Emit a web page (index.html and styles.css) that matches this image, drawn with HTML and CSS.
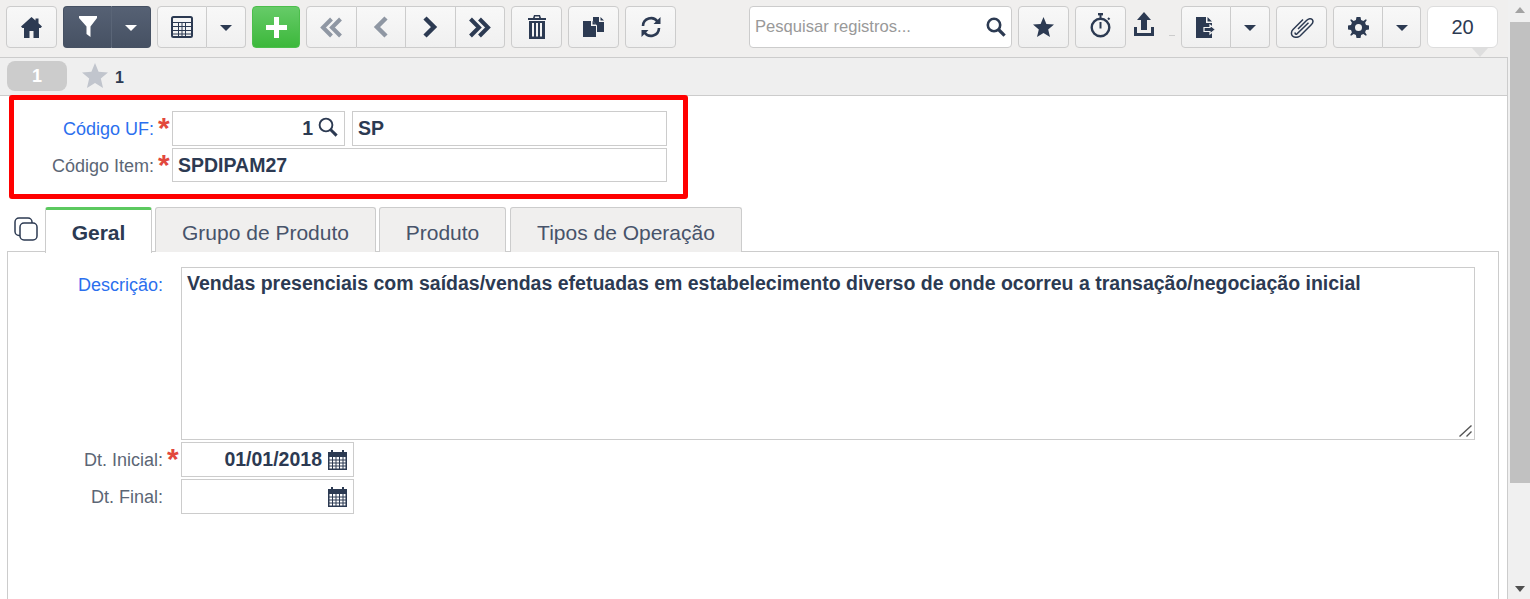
FILE: index.html
```html
<!DOCTYPE html>
<html lang="pt-BR">
<head>
    <meta charset="UTF-8">
    <meta name="viewport" content="width=device-width, initial-scale=1.0">
    <title>Código Item</title>
    <link rel="stylesheet" href="styles.css">
</head>
<body>
<div class="app">
    <div class="main">
        <!-- barra de ferramentas -->
        <div class="toolbar">
            <button class="btn"><svg class="icon" width="21" height="21" viewBox="0 0 21 21"><path d="M10.5 0 L14.5 3.6 V1.5 H17.5 V6.3 L21 9.6 L19.6 11 H18 V21 H12.5 V14 H8.5 V21 H3 V11 H1.4 L0 9.6 Z"/></svg></button>

            <div class="split dark">
                <button class="btn main-part"><svg width="20" height="22" viewBox="0 0 20 22"><path fill="#fff" d="M1 0 H19 V2 L12.5 10.5 V21 L8.5 18 V10.5 L1 2 Z"/></svg></button>
                <button class="btn caret-part"><span class="caret white"></span></button>
            </div>

            <div class="split wide">
                <button class="btn main-part"><svg width="22" height="22" viewBox="0 0 22 22" fill="none" stroke="#2c3a52"><rect x="1" y="1" width="20" height="20" rx="1.5" stroke-width="2"/><path stroke-width="1" d="M1 6.5 H21 M2 10.5 H20 M2 14.5 H20 M2 18 H20 M7.5 6 V20 M11 6 V20 M14.5 6 V20"/></svg></button>
                <button class="btn caret-part"><span class="caret"></span></button>
            </div>

            <button class="btn add"><svg width="21" height="21" viewBox="0 0 21 21"><path fill="#fff" d="M8 0 H13 V8 H21 V13 H13 V21 H8 V13 H0 V8 H8 Z"/></svg></button>

            <div class="nav-group">
                <button class="btn"><svg width="23" height="21" viewBox="0 0 23 21" fill="none" stroke="#8f97a3" stroke-width="4"><path d="M11.5 2 L3 10.5 L11.5 19 M20.5 2 L12 10.5 L20.5 19"/></svg></button>
                <button class="btn"><svg width="15" height="22" viewBox="0 0 15 22" fill="none" stroke="#8f97a3" stroke-width="4.5"><path d="M13 2 L4 11 L13 20"/></svg></button>
                <button class="btn"><svg width="15" height="22" viewBox="0 0 15 22" fill="none" stroke="#2c3a52" stroke-width="4.5"><path d="M2 2 L11 11 L2 20"/></svg></button>
                <button class="btn"><svg width="23" height="21" viewBox="0 0 23 21" fill="none" stroke="#2c3a52" stroke-width="4"><path d="M2.5 2 L11 10.5 L2.5 19 M11.5 2 L20 10.5 L11.5 19"/></svg></button>
            </div>

            <button class="btn"><svg class="icon" width="18" height="24" viewBox="0 0 18 24"><path d="M6 0 H12 L13 3 H18 V5 H0 V3 H5 Z M7 1.5 L6.8 3 H11.2 L11 1.5 Z" fill-rule="evenodd"/><path fill-rule="evenodd" d="M1 6 H17 V24 H1 Z M4 8 V21.5 H6 V8 Z M8 8 V21.5 H10 V8 Z M12 8 V21.5 H14 V8 Z"/></svg></button>
            <button class="btn"><svg class="icon" width="21" height="20" viewBox="0 0 21 20"><path d="M0 4 H8 V9 H13 V20 H0 Z M9.5 4 L13 7.5 H9.5 Z"/><path d="M10 0 H16 V5 H21 V15 H14 V8.5 L10 4.5 Z M17.5 0 L21 3.5 H17.5 Z"/></svg></button>
            <button class="btn"><svg width="22" height="22" viewBox="0 0 22 22" fill="none"><path stroke="#2c3a52" stroke-width="2.6" d="M3 10 A8 8 0 0 1 17.5 5.5 M19 12 A8 8 0 0 1 4.5 16.5"/><path fill="#2c3a52" d="M20.5 1 V8 H13.5 Z M1.5 21 V14 H8.5 Z"/></svg></button>

            <div class="search">
                <input type="text" class="search-input" placeholder="Pesquisar registros...">
                <svg width="20" height="20" viewBox="0 0 20 20" fill="none" stroke="#2c3a52"><circle cx="8" cy="8" r="6.2" stroke-width="2.6"/><path stroke-width="3.2" d="M12.5 12.5 L18.6 18.6"/></svg>
            </div>

            <button class="btn"><svg class="icon" width="21" height="20" viewBox="0 0 21 20"><path d="M10.5 0 L13.4 6.9 L21 7.6 L15.2 12.5 L17 20 L10.5 16 L4 20 L5.8 12.5 L0 7.6 L7.6 6.9 Z"/></svg></button>
            <button class="btn"><svg class="timer" width="21" height="25" viewBox="0 0 21 25" fill="none" stroke="#2c3a52"><path stroke-width="2.4" d="M8 1.2 H13"/><path stroke-width="2" d="M10.5 2 V5"/><circle cx="10.5" cy="14.5" r="8.8" stroke-width="2.4"/><path stroke-width="2" d="M10.5 9 V15.5"/><path stroke-width="2" d="M18 5 L19.5 6.5"/></svg></button>

            <div class="upload">
                <svg class="icon" width="20" height="24" viewBox="0 0 20 24"><path d="M10 0 L17 8 H13 V18 H7 V8 H3 Z M0 15 H3 V21 H17 V15 H20 V24 H0 Z"/></svg>
                <span class="upload-dash"></span>
            </div>

            <div class="split wide">
                <button class="btn main-part"><svg class="icon" width="20" height="21" viewBox="0 0 20 21"><path d="M0 0 H10 V6 H16 V21 H0 Z M11.5 0 L16 4.5 H11.5 Z"/><path stroke="#f5f5f5" stroke-width="1.2" d="M8 10.5 H14 V8 L19.5 12.5 L14 17 V14.5 H8 Z"/></svg></button>
                <button class="btn caret-part"><span class="caret"></span></button>
            </div>

            <button class="btn"><svg width="24" height="21" viewBox="0 0 24 21" fill="none" stroke="#2c3a52" stroke-width="1.5"><path d="M8 12 L16.5 3.5 C18.5 1.5 21 1.2 22.2 2.5 C23.5 4 23 6 21 8 L10 19 C7.5 21 4 20.5 2.5 19 C1 17.5 1 14.5 3 12.5 L13 2.5 M5.5 15.5 C4.8 16.5 5.3 17.5 6.5 17.2 L18.5 5.8"/></svg></button>

            <div class="split">
                <button class="btn main-part"><svg class="icon" width="21" height="21" viewBox="0 0 21 21"><path fill-rule="evenodd" d="M8.5 0 H12.5 L13.1 3 L15.3 3.9 L17.9 2.2 L18.8 3.1 L17.1 5.7 L18 7.9 L21 8.5 V12.5 L18 13.1 L17.1 15.3 L18.8 17.9 L17.9 18.8 L15.3 17.1 L13.1 18 L12.5 21 H8.5 L7.9 18 L5.7 17.1 L3.1 18.8 L2.2 17.9 L3.9 15.3 L3 13.1 L0 12.5 V8.5 L3 7.9 L3.9 5.7 L2.2 3.1 L3.1 2.2 L5.7 3.9 L7.9 3 Z M10.5 7 A3.5 3.5 0 1 0 10.5 14 A3.5 3.5 0 1 0 10.5 7 Z"/></svg></button>
                <button class="btn caret-part"><span class="caret"></span></button>
            </div>

            <div class="count">20</div>
        </div>

        <!-- abas de registros abertos -->
        <div class="subbar">
            <span class="record-badge">1</span>
            <svg class="record-star" width="26" height="25" viewBox="0 0 21 20"><path fill="#c1c5cd" d="M10.5 0 L13.4 6.9 L21 7.6 L15.2 12.5 L17 20 L10.5 16 L4 20 L5.8 12.5 L0 7.6 L7.6 6.9 Z"/></svg>
            <span class="record-name">1</span>
        </div>

        <div class="content">
            <div class="key-box">
                <div class="form-row">
                    <label class="key-label link">Código UF:</label>
                    <span class="required">*</span>
                    <div class="field field-code">
                        <span class="value">1</span>
                        <svg class="lookup" width="20" height="20" viewBox="0 0 20 20" fill="none" stroke="#2c3a52"><circle cx="8" cy="8" r="6.4" stroke-width="1.9"/><path stroke-width="3" d="M12.5 12.5 L18.6 18.6"/></svg>
                    </div>
                    <div class="field field-left field-uf"><span class="value">SP</span></div>
                </div>
                <div class="form-row short">
                    <label class="key-label">Código Item:</label>
                    <span class="required">*</span>
                    <div class="field field-left field-item"><span class="value">SPDIPAM27</span></div>
                </div>
            </div>

            <div class="tabs">
                <svg class="tabs-copy" width="24" height="24" viewBox="0 0 24 24" fill="none" stroke="#2c3a52" stroke-width="1.5"><rect x="6" y="6" width="17" height="17" rx="4"/><path d="M6 18.5 H5 A4 4 0 0 1 1 14.5 V5 A4 4 0 0 1 5 1 H14 A4 4 0 0 1 18 5 V6"/></svg>
                <div class="tab active">Geral</div>
                <div class="tab tab-grupo">Grupo de Produto</div>
                <div class="tab tab-produto">Produto</div>
                <div class="tab tab-tipos">Tipos de Operação</div>
            </div>

            <div class="panel">
                <div class="form-row top">
                    <label class="panel-label link">Descrição:</label>
                    <span class="required"></span>
                    <div class="description-wrap">
                        <textarea class="description">Vendas presenciais com saídas/vendas efetuadas em estabelecimento diverso de onde ocorreu a transação/negociação inicial</textarea>
                        <svg class="resize-grip" width="13" height="12" viewBox="0 0 13 12" fill="none" stroke="#555" stroke-width="1.4"><path d="M0.5 11.5 L12.5 0.5 M7.5 11.5 L12.5 6.5"/></svg>
                    </div>
                </div>
                <div class="form-row">
                    <label class="panel-label">Dt. Inicial:</label>
                    <span class="required">*</span>
                    <div class="field field-date">
                        <span class="value">01/01/2018</span>
                        <svg class="icon" width="19" height="20" viewBox="0 0 19 20"><path fill-rule="evenodd" d="M3 0 H5 V2 H14 V0 H16 V2 H19 V20 H0 V2 H3 Z M1.5 7 V18.5 H17.5 V7 Z"/><path fill="none" stroke="#2c3a52" d="M1 10 H18 M1 13 H18 M1 16 H18 M4.5 7 V19 M8 7 V19 M11.5 7 V19 M15 7 V19"/></svg>
                    </div>
                </div>
                <div class="form-row">
                    <label class="panel-label">Dt. Final:</label>
                    <span class="required"></span>
                    <div class="field field-date">
                        <svg class="icon" width="19" height="20" viewBox="0 0 19 20"><path fill-rule="evenodd" d="M3 0 H5 V2 H14 V0 H16 V2 H19 V20 H0 V2 H3 Z M1.5 7 V18.5 H17.5 V7 Z"/><path fill="none" stroke="#2c3a52" d="M1 10 H18 M1 13 H18 M1 16 H18 M4.5 7 V19 M8 7 V19 M11.5 7 V19 M15 7 V19"/></svg>
                    </div>
                </div>
            </div>
        </div>
    </div>

    <!-- barra de rolagem -->
    <div class="scrollbar">
        <span class="arrow-up"></span>
        <div class="thumb"></div>
        <span class="arrow-down"></span>
    </div>
</div>
</body>
</html>
```

FILE: styles.css
```css
* {
    box-sizing: border-box;
}

html, body {
    margin: 0;
    height: 100%;
    overflow: hidden;
}

body {
    font-family: "Liberation Sans", Arial, sans-serif;
    color: #2c3a52;
    background: #fff;
}

.app {
    display: flex;
    height: 599px;
}

.main {
    width: 1508px;
    display: flex;
    flex-direction: column;
}

.icon {
    fill: #2c3a52;
}

/* barra de ferramentas */
.toolbar {
    height: 58px;
    display: flex;
    gap: 6px;
    padding: 6px 10px 0 6px;
    background: #f0efee;
    border-bottom: 1px solid #ccc;
    flex-shrink: 0;
}

.btn {
    width: 51px;
    height: 42px;
    padding: 0;
    display: flex;
    align-items: center;
    justify-content: center;
    background: linear-gradient(#f8f8f8, #f0f0f0);
    border: 1px solid #ccc;
    border-radius: 4px;
    flex-shrink: 0;
}

.split {
    display: flex;
    width: 88px;
    flex-shrink: 0;
}

.split.wide {
    width: 89px;
}

.split .main-part {
    width: 50px;
    border-radius: 4px 0 0 4px;
}

.split .caret-part {
    flex: 1;
    border-left: 0;
    border-radius: 0 4px 4px 0;
}

.split.dark .btn {
    background: linear-gradient(#566174, #465163);
    border-color: #465163;
}

.split.dark .main-part {
    width: 49px;
    border-right-color: #5a6577;
}

.caret {
    width: 0;
    height: 0;
    border-left: 6px solid transparent;
    border-right: 6px solid transparent;
    border-top: 6px solid #2c3a52;
    margin-top: 2px;
}

.caret.white {
    border-top-color: #fff;
}

.btn.add {
    width: 48px;
    background: linear-gradient(#66cb68, #3cb83b);
    border-color: #4cbe4c;
}

.nav-group {
    display: flex;
    width: 199px;
    flex-shrink: 0;
}

.nav-group .btn {
    flex: 1;
    width: auto;
    border-radius: 0;
    border-left: 0;
}

.nav-group .btn:first-child {
    border-left: 1px solid #ccc;
    border-radius: 4px 0 0 4px;
}

.nav-group .btn:last-child {
    border-radius: 0 4px 4px 0;
}

.search {
    width: 263px;
    height: 42px;
    margin-left: auto;
    padding: 0 5px;
    display: flex;
    align-items: center;
    background: #fff;
    border: 1px solid #ccc;
    border-radius: 4px;
    flex-shrink: 0;
}

.search-input {
    flex: 1;
    min-width: 0;
    border: 0;
    padding: 0;
    outline: none;
    font: 16.6px "Liberation Sans", Arial, sans-serif;
}

.search-input::placeholder {
    color: #999;
    opacity: 1;
}

.timer {
    margin-top: -4px;
}

.upload {
    width: 43px;
    display: flex;
    padding: 6px 0 0 2px;
    flex-shrink: 0;
}

.upload-dash {
    width: 6px;
    height: 1px;
    margin: 23px 0 0 15px;
    background: #ccc;
}

.count {
    position: relative;
    width: 71px;
    height: 42px;
    font-size: 20px;
    line-height: 40px;
    text-align: center;
    background: #fff;
    border: 1px solid #ddd;
    border-radius: 6px;
    flex-shrink: 0;
}

/* seta do contador */
.count::after {
    content: "";
    position: absolute;
    left: 44px;
    top: 41px;
    width: 0;
    height: 0;
    border-left: 8px solid transparent;
    border-right: 8px solid transparent;
    border-top: 9px solid #dedede;
}

/* registros abertos */
.subbar {
    height: 38px;
    display: flex;
    align-items: center;
    padding: 0 0 1px 7px;
    background: #efefef;
    border-right: 1px solid #ccc;
    border-bottom: 1px solid #ccc;
    flex-shrink: 0;
}

.record-badge {
    width: 60px;
    height: 30px;
    margin-right: 15px;
    color: #fff;
    font-size: 18px;
    font-weight: bold;
    line-height: 30px;
    text-align: center;
    background: #ccc;
    border-radius: 8px;
}

.record-star {
    margin-bottom: 2px;
}

.record-name {
    margin: 3px 0 0 7px;
    font-size: 16px;
    font-weight: bold;
}

.content {
    flex: 1;
    border-right: 1px solid #ccc;
}

/* caixa vermelha dos campos chave */
.key-box {
    width: 679px;
    height: 104px;
    margin: -1px 0 0 9px;
    padding: 11px 0 0;
    border: 5px solid #f00;
    border-radius: 3px;
}

.form-row {
    display: flex;
    height: 35px;
    margin-bottom: 2px;
}

.form-row.short {
    height: 34px;
}

.form-row.top {
    height: 173px;
}

.key-label,
.panel-label {
    padding-top: 8px;
    font-size: 18px;
    color: #5c6675;
    text-align: right;
    white-space: nowrap;
}

.key-label {
    width: 140px;
}

.panel-label {
    width: 155px;
}

.link {
    color: #2b6fee;
}

.required {
    width: 18px;
    padding-left: 4px;
    color: #e2483d;
    font-size: 30px;
    font-weight: bold;
    line-height: 34px;
    flex-shrink: 0;
}

.field {
    height: 100%;
    display: flex;
    align-items: center;
    justify-content: flex-end;
    padding: 0 6px;
    gap: 5px;
    background: #fff;
    border: 1px solid #ccc;
}

.field-left {
    justify-content: flex-start;
    padding-left: 5px;
}

.value {
    font-size: 19.5px;
    font-weight: bold;
}

.field-code {
    width: 173px;
}

.lookup {
    margin-bottom: 3px;
}

.field-uf {
    width: 315px;
    margin-left: 7px;
}

.field-item {
    width: 495px;
}

.field-date {
    width: 173px;
    gap: 6px;
}

/* abas */
.tabs {
    display: flex;
    height: 45px;
    margin: 8px 8px 0 7px;
    padding-left: 38px;
    gap: 3px;
    align-items: flex-end;
    position: relative;
}

.tabs-copy {
    position: absolute;
    left: 7px;
    top: 10px;
}

.tab {
    height: 45px;
    padding-top: 13px;
    font-size: 21px;
    text-align: center;
    color: #47536a;
    background: #f0efee;
    border: 1px solid #ccc;
    border-bottom: 0;
    border-radius: 3px 3px 0 0;
}

.tab.active {
    width: 107px;
    height: 46px;
    margin-bottom: -1px;
    padding-top: 11px;
    font-weight: bold;
    color: #2c3a52;
    background: #fff;
    border-top: 3px solid #5cc95f;
    position: relative;
}

.tab-grupo {
    width: 221px;
}

.tab-produto {
    width: 127px;
}

.tab-tipos {
    width: 232px;
    margin-left: 1px;
}

.panel {
    height: 348px;
    margin: -1px 8px 0 7px;
    padding-top: 15px;
    border: 1px solid #ccc;
    border-bottom: 0;
}

.description-wrap {
    position: relative;
    width: 1294px;
    height: 173px;
}

.description {
    display: block;
    width: 100%;
    height: 100%;
    padding: 4px 5px;
    font: bold 19.5px "Liberation Sans", Arial, sans-serif;
    color: #2c3a52;
    border: 1px solid #ccc;
    outline: none;
    resize: none;
}

.resize-grip {
    position: absolute;
    right: 3px;
    bottom: 3px;
}

/* barra de rolagem */
.scrollbar {
    width: 22px;
    display: flex;
    flex-direction: column;
    align-items: center;
    padding-left: 2px;
    background: #f0f0f0;
}

.thumb {
    width: 20px;
    height: 461px;
    margin-top: 9px;
    background: #c1c1c1;
}

.arrow-up,
.arrow-down {
    width: 0;
    height: 0;
    border-left: 5.5px solid transparent;
    border-right: 5.5px solid transparent;
}

.arrow-up {
    margin-top: 7px;
    border-bottom: 6px solid #a3a3a3;
}

.arrow-down {
    margin-top: 103px;
    border-top: 6px solid #505050;
}
```
